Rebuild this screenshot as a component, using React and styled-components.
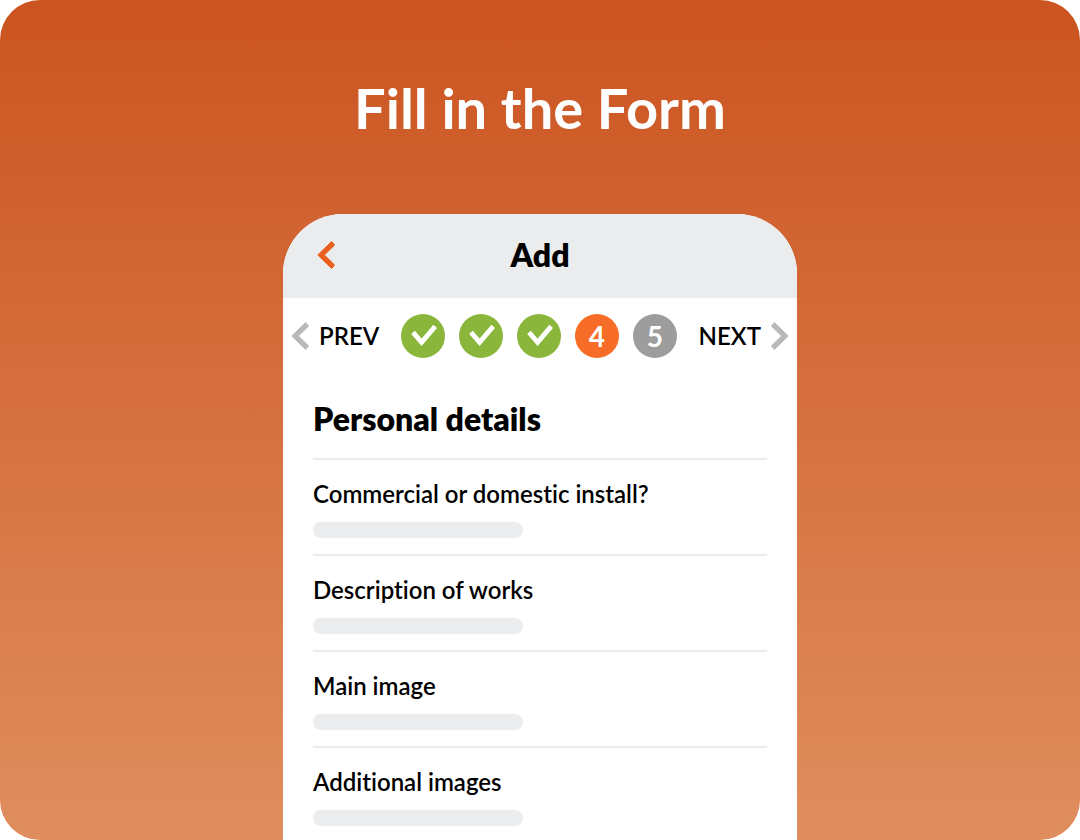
import React, { useState } from "react";
import styled, { createGlobalStyle } from "styled-components";

const GlobalStyle = createGlobalStyle`
    * {
        box-sizing: border-box;
    }

    body {
        margin: 0;
        background: #ffffff;
        color: #000000;
        font-family: Lato, "Open Sans", sans-serif;
        font-variant-ligatures: none;
    }

    button,
    input {
        font-family: inherit;
        color: inherit;
    }
`;

const Stage = styled.main`
    display: flex;
    flex-direction: column;
    align-items: center;
    height: 100vh;
    overflow: hidden;
    border-radius: 40px;
    background: linear-gradient(180deg, #cb5420 0%, #e08e5e 100%);
`;

const Title = styled.h1`
    margin: 0;
    padding: 76px 16px 74px;
    font-weight: 700;
    font-size: 56px;
    line-height: 64px;
    text-align: center;
    color: #ffffff;
`;

const Phone = styled.section`
    display: flex;
    flex-direction: column;
    flex: 1;
    width: 100%;
    max-width: 514px;
    overflow: hidden;
    border-radius: 60px 60px 0 0;
    background: #ffffff;
`;

const Header = styled.header`
    display: grid;
    grid-template-columns: 1fr auto 1fr;
    align-items: center;
    flex-shrink: 0;
    height: 84px;
    padding: 0 34px 2px;
    background: #ebecee;
`;

const IconButton = styled.button`
    display: flex;
    align-items: center;
    justify-self: start;
    padding: 0;
    border: 0;
    background: none;
    cursor: pointer;
`;

const HeaderTitle = styled.h2`
    margin: 0;
    font-weight: 800;
    font-size: 32px;
    line-height: 34px;
`;

const Stepper = styled.nav`
    display: flex;
    align-items: center;
    justify-content: space-between;
    flex-shrink: 0;
    height: 76px;
    padding: 0 8px;
`;

const NavButton = styled.button`
    display: flex;
    align-items: center;
    gap: 10px;
    padding: 0;
    border: 0;
    background: none;
    font-weight: 600;
    font-size: 24px;
    line-height: 28px;
    cursor: pointer;
`;

const Steps = styled.ol`
    display: flex;
    gap: 14px;
    margin: 0;
    padding: 0;
    list-style: none;
`;

const stepColors = {
    done: "#8ab63c",
    current: "#f76c27",
    upcoming: "#9d9d9d",
};

const StepButton = styled.button`
    display: flex;
    align-items: center;
    justify-content: center;
    width: 44px;
    height: 44px;
    padding: 0;
    border: 0;
    border-radius: 50%;
    background: ${({ $status }) => stepColors[$status]};
    color: #ffffff;
    font-weight: 700;
    font-size: 28px;
    line-height: 32px;
    cursor: pointer;
`;

const Form = styled.form`
    padding: 28px 30px 0;
`;

const FormTitle = styled.h3`
    margin: 0;
    padding-bottom: 22px;
    border-bottom: 2px solid #ebebeb;
    font-weight: 800;
    font-size: 32px;
    line-height: 34px;
`;

const Field = styled.div`
    display: flex;
    flex-direction: column;
    align-items: flex-start;
    gap: 14px;
    padding: 20px 0 16px;
    border-bottom: 2px solid #ebebeb;
`;

const Label = styled.label`
    font-weight: 600;
    font-size: 24px;
    line-height: 28px;
`;

const Input = styled.input`
    width: 210px;
    height: 16px;
    padding: 0 8px;
    border: 0;
    border-radius: 8px;
    background: #ebecee;
    font-size: 12px;
`;

const Chevron = ({ color, right }) => (
    <svg width="18" height="28" viewBox="0 0 18 28" aria-hidden="true">
        <path
            d={
                right
                    ? "M3.4 0.6L17.2 14L3.4 27.4L0.8 24.6V23.6L10.6 14L0.8 4.4V3.4Z"
                    : "M14.6 0.6L0.8 14L14.6 27.4L17.2 24.6V23.6L7.4 14L17.2 4.4V3.4Z"
            }
            fill={color}
            stroke={color}
            strokeLinejoin="round"
        />
    </svg>
);

const Check = () => (
    <svg width="44" height="44" viewBox="0 0 44 44" fill="none" aria-hidden="true">
        <path d="M12 18.4L20.6 28.4L34.2 12.4" stroke="#ffffff" strokeWidth="4.8" />
    </svg>
);

const steps = [1, 2, 3, 4, 5];

const fields = [
    { id: "install", label: "Commercial or domestic install?" },
    { id: "description", label: "Description of works" },
    { id: "main-image", label: "Main image" },
    { id: "additional-images", label: "Additional images" },
];

const getStatus = (step, current) => {
    if (step < current) return "done";
    return step === current ? "current" : "upcoming";
};

const App = () => {
    const [current, setCurrent] = useState(4);

    return (
        <>
            <GlobalStyle />
            <Stage>
                <Title>Fill in the Form</Title>
                <Phone>
                    <Header>
                        <IconButton type="button" aria-label="Back">
                            <Chevron color="#e9601f" />
                        </IconButton>
                        <HeaderTitle>Add</HeaderTitle>
                    </Header>
                    <Stepper aria-label="Form steps">
                        <NavButton
                            type="button"
                            onClick={() => setCurrent(Math.max(1, current - 1))}
                        >
                            <Chevron color="#b9b9b9" />
                            PREV
                        </NavButton>
                        <Steps>
                            {steps.map((step) => {
                                const status = getStatus(step, current);
                                return (
                                    <li key={step}>
                                        <StepButton
                                            type="button"
                                            $status={status}
                                            aria-label={`Step ${step}`}
                                            onClick={() => setCurrent(step)}
                                        >
                                            {status === "done" ? <Check /> : step}
                                        </StepButton>
                                    </li>
                                );
                            })}
                        </Steps>
                        <NavButton
                            type="button"
                            onClick={() =>
                                setCurrent(Math.min(steps.length, current + 1))
                            }
                        >
                            NEXT
                            <Chevron color="#b9b9b9" right />
                        </NavButton>
                    </Stepper>
                    <Form>
                        <FormTitle>Personal details</FormTitle>
                        {fields.map(({ id, label }) => (
                            <Field key={id}>
                                <Label htmlFor={id}>{label}</Label>
                                <Input id={id} type="text" />
                            </Field>
                        ))}
                    </Form>
                </Phone>
            </Stage>
        </>
    );
};

export default App;
